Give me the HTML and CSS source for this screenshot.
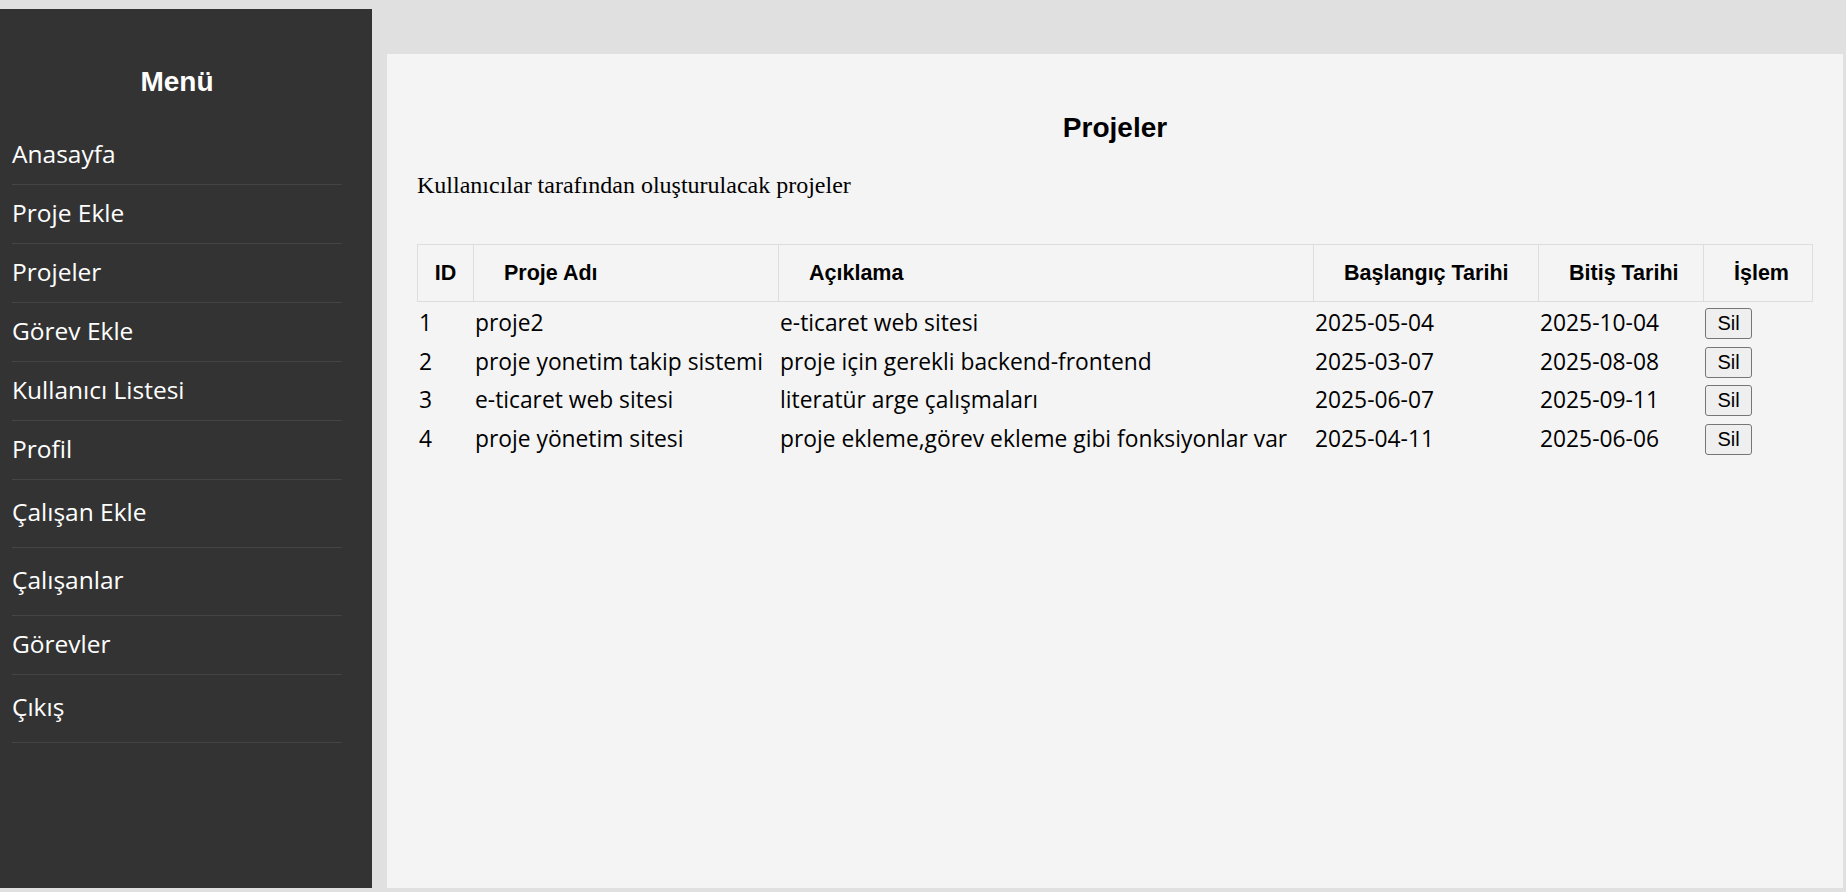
FILE: index.html
```html
<!DOCTYPE html>
<html lang="tr">
<head>
<meta charset="utf-8">
<title>Projeler</title>
<link rel="stylesheet" href="styles.css">
</head>
<body>
<div class="layout">
  <aside class="sidebar">
    <h3 class="sidebar-title">Menü</h3>
    <ul class="menu">
      <li class="menu-item"><a class="menu-link" href="#">Anasayfa</a></li>
      <li class="menu-item"><a class="menu-link" href="#">Proje Ekle</a></li>
      <li class="menu-item"><a class="menu-link" href="#">Projeler</a></li>
      <li class="menu-item"><a class="menu-link" href="#">Görev Ekle</a></li>
      <li class="menu-item"><a class="menu-link" href="#">Kullanıcı Listesi</a></li>
      <li class="menu-item"><a class="menu-link" href="#">Profil</a></li>
      <li class="menu-item menu-item--tall"><a class="menu-link" href="#">Çalışan Ekle</a></li>
      <li class="menu-item menu-item--tall"><a class="menu-link" href="#">Çalışanlar</a></li>
      <li class="menu-item"><a class="menu-link" href="#">Görevler</a></li>
      <li class="menu-item menu-item--tall"><a class="menu-link" href="#">Çıkış</a></li>
    </ul>
  </aside>
  <main class="panel">
    <h3 class="panel-title">Projeler</h3>
    <p class="panel-desc">Kullanıcılar tarafından oluşturulacak projeler</p>
    <table class="projects">
      <colgroup>
        <col class="col-id">
        <col class="col-name">
        <col class="col-desc">
        <col class="col-start">
        <col class="col-end">
        <col class="col-action">
      </colgroup>
      <thead>
        <tr>
          <th class="th-id">ID</th>
          <th>Proje Adı</th>
          <th>Açıklama</th>
          <th>Başlangıç Tarihi</th>
          <th>Bitiş Tarihi</th>
          <th>İşlem</th>
        </tr>
      </thead>
      <tbody>
        <tr>
          <td>1</td>
          <td>proje2</td>
          <td>e-ticaret web sitesi</td>
          <td>2025-05-04</td>
          <td>2025-10-04</td>
          <td><button class="btn-delete" type="button">Sil</button></td>
        </tr>
        <tr>
          <td>2</td>
          <td>proje yonetim takip sistemi</td>
          <td>proje için gerekli backend-frontend</td>
          <td>2025-03-07</td>
          <td>2025-08-08</td>
          <td><button class="btn-delete" type="button">Sil</button></td>
        </tr>
        <tr>
          <td>3</td>
          <td>e-ticaret web sitesi</td>
          <td>literatür arge çalışmaları</td>
          <td>2025-06-07</td>
          <td>2025-09-11</td>
          <td><button class="btn-delete" type="button">Sil</button></td>
        </tr>
        <tr>
          <td>4</td>
          <td>proje yönetim sitesi</td>
          <td>proje ekleme,görev ekleme gibi fonksiyonlar var</td>
          <td>2025-04-11</td>
          <td>2025-06-06</td>
          <td><button class="btn-delete" type="button">Sil</button></td>
        </tr>
      </tbody>
    </table>
  </main>
</div>
</body>
</html>
```

FILE: styles.css
```css
html, body {
  margin: 0;
  padding: 0;
}

body {
  background: #e0e0e0;
  font-family: "Liberation Serif", "Times New Roman", serif;
  overflow: hidden;
}

.layout {
  display: flex;
  align-items: flex-start;
  gap: 15px;
  padding-top: 9px;
  height: 892px;
  box-sizing: border-box;
}

/* Sidebar */
.sidebar {
  flex: 0 0 372px;
  height: 879px;
  background: #333333;
  box-sizing: border-box;
  padding: 29px 30px 0 12px;
}

.sidebar-title {
  margin: 28px 0;
  font-family: "Liberation Sans", Arial, sans-serif;
  font-size: 28px;
  font-weight: bold;
  color: #ffffff;
  text-align: center;
  line-height: 32px;
}

.menu {
  list-style: none;
  margin: 0;
  padding: 0;
}

.menu-item {
  border-bottom: 1px solid #444444;
  padding: 11px 0 13px;
  height: 34px;
  font-family: "Open Sans", "Noto Sans", sans-serif;
  font-size: 24.5px;
  line-height: 34px;
}

.menu-item--tall {
  padding: 15px 0 18px;
}

.menu-link {
  color: #ffffff;
  text-decoration: none;
}

/* Main panel */
.panel {
  flex: 1 1 auto;
  margin-top: 45px;
  margin-right: 3px;
  height: 834px;
  background: #f4f4f4;
  box-sizing: border-box;
  padding: 30px;
}

.panel-title {
  margin: 28px 0;
  font-family: "Liberation Sans", Arial, sans-serif;
  font-size: 28px;
  font-weight: bold;
  color: #000000;
  text-align: center;
  line-height: 32px;
}

.panel-desc {
  margin: 0 0 44px;
  font-size: 24px;
  line-height: 27.6px;
  color: #000000;
}

/* Table */
.projects {
  width: 100%;
  border-collapse: collapse;
  table-layout: fixed;
}

.col-id { width: 56px; }
.col-name { width: 305px; }
.col-desc { width: 535px; }
.col-start { width: 225px; }
.col-end { width: 165px; }
.col-action { width: 109px; }

.projects th {
  border: 1px solid #dddddd;
  padding: 16px 0 16px 30px;
  font-family: "Liberation Sans", Arial, sans-serif;
  font-size: 21.5px;
  font-weight: bold;
  line-height: 24px;
  text-align: left;
  color: #000000;
  white-space: nowrap;
}

.projects th.th-id {
  padding-left: 0;
  text-align: center;
}

.projects td {
  padding: 6.3px 1.5px 1.4px;
  vertical-align: top;
  font-family: "Open Sans", "Noto Sans", sans-serif;
  font-size: 22.8px;
  line-height: 29px;
  color: #000000;
  white-space: nowrap;
}

.btn-delete {
  display: inline-block;
  vertical-align: top;
  width: 47px;
  height: 31px;
  margin: 0;
  padding: 0;
  border: 1px solid #767676;
  border-radius: 3px;
  background: #efefef;
  font-family: "Liberation Sans", Arial, sans-serif;
  font-size: 20px;
  color: #000000;
  cursor: pointer;
}
```
